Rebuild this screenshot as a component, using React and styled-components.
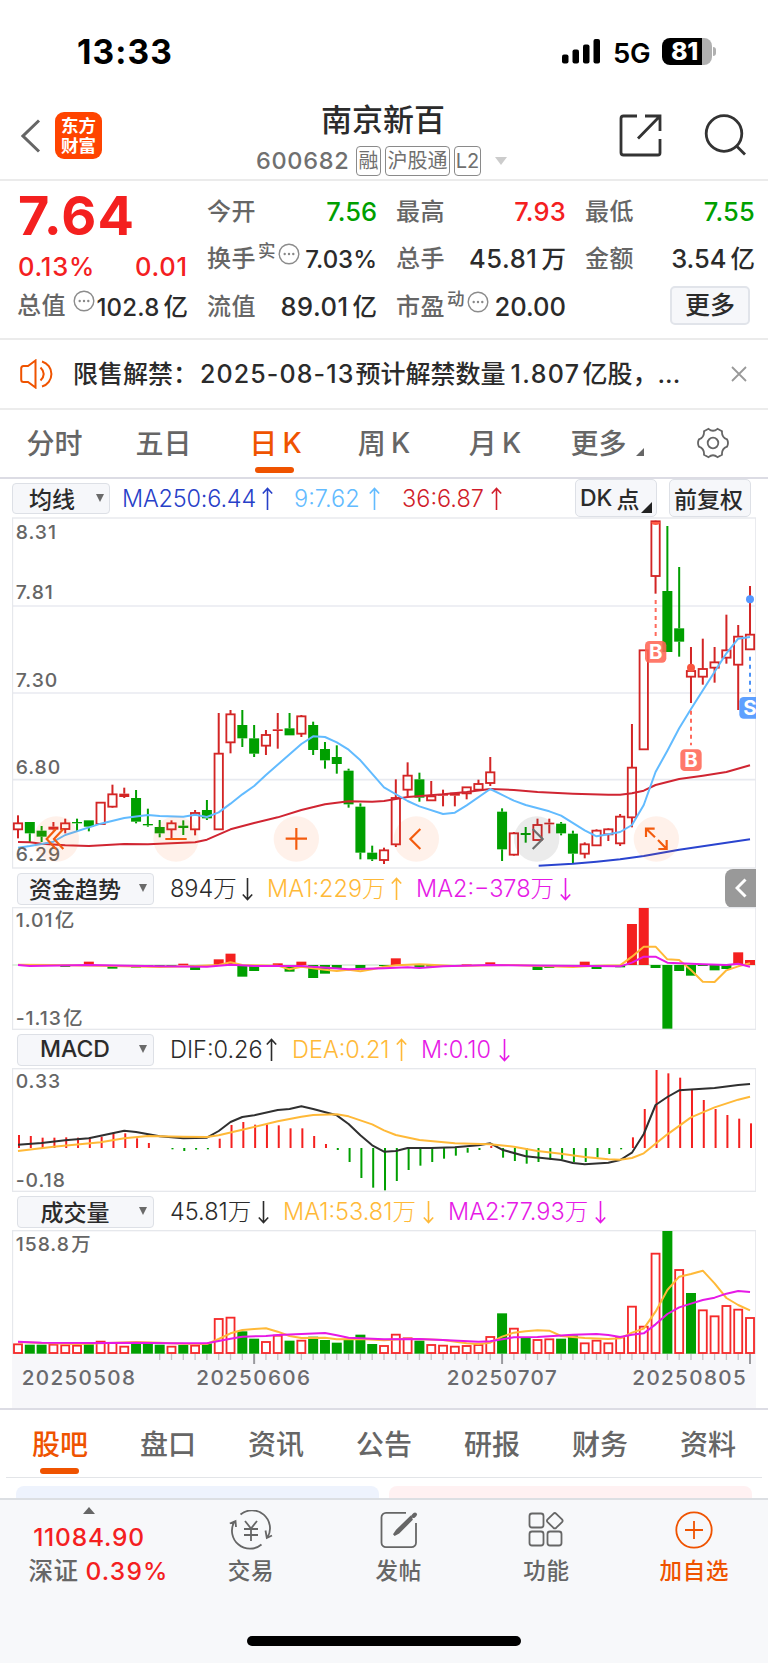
import React from "react";
import styled, { createGlobalStyle } from "styled-components";

const RED = "#f4201f";
const GREEN = "#009f00";
const ORANGE = "#ef5300";
const YELLOW = "#ffb938";
const PURPLE = "#e619e6";
const DARK = "#2b2b2b";
const GREY = "#666";

/* ---------- data ---------- */

// [type, high, top, bottom, low]
const candles = [
  ["r", 916, 940, 958, 985], ["g", 936, 936, 970, 996], ["g", 948, 962, 980, 996],
  ["R", 936, 950, 959, 961], ["r", 926, 940, 957, 970], ["g", 926, 936, 940, 963],
  ["g", 931, 931, 950, 964], ["r", 878, 878, 942, 942], ["r", 824, 853, 890, 893],
  ["R", 833, 851, 861, 864], ["g", 840, 864, 935, 940], ["g", 896, 942, 946, 950],
  ["g", 930, 951, 970, 982], ["r", 931, 940, 958, 985], ["g", 931, 947, 954, 975],
  ["r", 900, 909, 958, 976], ["g", 870, 900, 925, 930], ["r", 609, 731, 958, 960],
  ["r", 600, 613, 697, 730], ["g", 600, 645, 685, 711], ["g", 645, 685, 731, 741],
  ["r", 660, 675, 707, 735], ["R", 609, 658, 663, 716], ["g", 609, 655, 676, 676],
  ["r", 615, 619, 671, 681], ["g", 635, 645, 720, 735], ["g", 696, 717, 751, 776],
  ["g", 706, 741, 762, 791], ["g", 776, 782, 883, 893], ["g", 880, 890, 1028, 1048],
  ["g", 1007, 1028, 1048, 1053], ["r", 1013, 1021, 1050, 1062], ["r", 808, 864, 1003, 1011],
  ["r", 757, 797, 839, 860], ["g", 788, 808, 863, 875], ["r", 813, 859, 871, 873],
  ["R", 839, 852, 857, 889], ["R", 848, 848, 857, 889], ["r", 832, 832, 850, 868],
  ["r", 809, 822, 839, 840], ["r", 741, 787, 819, 828], ["g", 895, 905, 1018, 1053],
  ["r", 966, 970, 1034, 1037], ["g", 951, 969, 975, 998], ["r", 926, 945, 990, 992],
  ["R", 926, 938, 943, 970], ["g", 936, 941, 970, 976], ["g", 962, 971, 1031, 1061],
  ["r", 997, 1003, 1031, 1045], ["r", 958, 962, 1006, 1008], ["r", 955, 958, 973, 993],
  ["r", 912, 920, 1000, 1008], ["r", 642, 773, 922, 952], ["r", 421, 421, 718, 718],
  ["r", 32, 34, 198, 251], ["g", 48, 243, 426, 426], ["g", 171, 355, 395, 440],
  ["r", 411, 483, 500, 579], ["r", 386, 477, 500, 524], ["r", 411, 457, 473, 518],
  ["r", 314, 421, 443, 461], ["r", 345, 380, 464, 600], ["r", 228, 374, 418, 420],
];

const ma9 = [
  [0, 1013], [1, 1008], [2, 1002], [3, 995], [4, 975], [7, 941], [9, 924], [11, 915], [12, 918],
  [14, 920], [15, 914], [16, 921], [17, 907], [18, 881], [19, 853], [20, 828], [21, 795], [24, 702],
  [25, 679], [26, 681], [27, 697], [28, 719], [29, 751], [31, 832], [33, 873], [34, 889], [36, 912],
  [37, 908], [38, 886], [40, 837], [42, 872], [43, 885], [45, 904], [46, 917], [48, 961], [49, 979],
  [50, 973], [51, 966], [52, 945], [53, 885], [54, 786], [55, 722], [56, 655], [57, 597], [60, 430],
  [61, 386], [62, 381],
];
const ma36 = [
  [0, 996], [1, 997], [2, 1001], [4, 1006], [6, 1008], [9, 1002], [11, 1003], [14, 998], [15, 997],
  [16, 989], [18, 958], [20, 939], [22, 922], [24, 900], [26, 883], [28, 874], [30, 875], [31, 873],
  [33, 861], [36, 853], [38, 846], [40, 837], [42, 840], [44, 846], [47, 851], [50, 854], [51, 854],
  [52, 850], [53, 842], [54, 825], [56, 807], [58, 797], [60, 786], [62, 766],
];
const ma250 = [[44.1, 1067], [47, 1061], [49, 1055], [51, 1048], [53, 1038], [56, 1019], [62, 988]];

const fundBars = [
  [4, 321], [6, 305], [8, 326], [9, 320], [10, 323], [11, 321], [12, 320], [13, 319], [14, 311],
  [15, 330], [16, 320], [17, 298], [18, 281], [19, 350], [20, 333], [22, 310], [23, 335], [24, 305],
  [25, 354], [26, 341], [27, 324], [29, 328], [31, 318], [32, 295], [34, 323], [35, 320], [38, 313],
  [40, 307], [44, 330], [45, 324], [48, 305], [49, 327], [51, 322], [52, 192], [53, 144], [54, 324],
  [55, 506], [56, 333], [57, 347], [58, 318], [59, 331], [60, 327], [61, 277], [62, 300],
];
const fundMa1 = [
  [0, 314], [3, 315], [7, 317], [12, 321], [15, 318], [17, 315], [18, 307], [19, 315], [22, 317],
  [23, 328], [24, 320], [26, 329], [27, 333], [28, 329], [29, 334], [30, 328], [31, 320], [32, 316],
  [34, 313], [37, 318], [40, 316], [42, 315], [44, 318], [47, 321], [49, 317], [51, 316], [52, 290],
  [53, 260], [54, 260], [55, 298], [56, 300], [57, 330], [58, 365], [59, 366], [60, 331], [61, 319],
  [62, 310],
];
const fundMa2 = [
  [0, 315], [1, 318], [6, 315], [12, 319], [16, 320], [18, 314], [20, 318], [24, 318], [28, 328],
  [31, 325], [33, 322], [34, 324], [36, 319], [40, 315], [46, 317], [51, 319], [52, 308], [53, 290],
  [54, 290], [55, 308], [58, 313], [60, 315], [61, 311], [62, 320],
];

const macdBars = [
  825, 828, 833, 833, 832, 833, 833, 830, 818, 820, 835, 849, 864, 868, 873, 869, 868, 836, 795, 786,
  794, 793, 796, 805, 805, 828, 852, 870, 906, 954, 983, 991, 963, 930, 917, 906, 896, 887, 878, 870,
  858, 893, 903, 911, 906, 899, 898, 907, 906, 893, 882, 868, 832, 747, 630, 640, 653, 688, 720, 747,
  765, 776, 790,
];
const dif = [
  [0, 854], [2, 849], [4, 841], [6, 835], [7, 827], [9, 812], [10, 816], [12, 829], [14, 835],
  [16, 833], [17, 813], [18, 786], [19, 771], [20, 766], [22, 750], [23, 747], [24, 739], [25, 747],
  [27, 766], [28, 792], [29, 826], [30, 856], [31, 875], [32, 873], [33, 864], [35, 864], [37, 862],
  [39, 856], [40, 850], [41, 869], [43, 889], [45, 896], [46, 900], [47, 909], [48, 913], [50, 908],
  [51, 900], [52, 878], [53, 822], [54, 735], [55, 711], [56, 691], [58, 686], [59, 684], [61, 675],
  [62, 672],
];
const dea = [
  [0, 873], [3, 860], [7, 847], [9, 835], [11, 828], [14, 830], [16, 831], [17, 826], [19, 809],
  [22, 784], [24, 770], [25, 765], [27, 763], [28, 769], [30, 793], [31, 811], [32, 825], [34, 840],
  [37, 850], [40, 853], [42, 860], [44, 873], [46, 881], [48, 891], [50, 898], [51, 899], [52, 894],
  [53, 880], [55, 823], [57, 772], [59, 742], [61, 719], [62, 710],
];

const volumes = [
  461, 464, 464, 462, 464, 465, 463, 453, 457, 468, 459, 461, 464, 468, 465, 465, 460, 385, 381, 424,
  446, 454, 435, 452, 450, 440, 450, 458, 448, 434, 462, 466, 432, 443, 452, 463, 465, 468, 466, 463,
  439, 370, 414, 441, 448, 446, 446, 436, 458, 450, 458, 440, 348, 408, 189, 123, 238, 309, 359, 377,
  346, 357, 382,
];
const volGreen = [1, 2, 6, 10, 11, 12, 14, 16, 19, 20, 23, 25, 26, 27, 28, 29, 30, 34, 41, 43, 46, 47, 55, 57];
const volMa1 = [
  [0, 456], [2, 459], [5, 462], [7, 460], [10, 456], [12, 458], [14, 461], [16, 462], [17, 447],
  [18, 430], [19, 420], [20, 417], [21, 415], [22, 425], [23, 438], [24, 444], [26, 443], [27, 448],
  [29, 447], [31, 451], [33, 446], [36, 450], [38, 460], [39, 462], [40, 458], [41, 440], [42, 428],
  [43, 424], [44, 421], [45, 422], [46, 438], [48, 444], [50, 447], [51, 445], [52, 428], [53, 416],
  [54, 365], [55, 300], [56, 260], [57, 252], [58, 242], [59, 280], [60, 324], [61, 345], [62, 361],
];
const volMa2 = [
  [0, 455], [2, 458], [7, 459], [10, 458], [13, 460], [16, 460], [17, 453], [18, 446], [19, 440],
  [21, 438], [22, 435], [24, 432], [26, 429], [27, 436], [28, 443], [31, 448], [34, 447], [36, 450],
  [39, 455], [40, 454], [42, 442], [44, 441], [47, 434], [49, 432], [50, 435], [51, 441], [52, 434],
  [53, 430], [54, 403], [55, 372], [56, 352], [57, 341], [58, 330], [59, 323], [60, 311], [61, 303],
  [62, 306],
];

const x = (i) => 54 + i * 35.42;
const toPoints = (line) => line.map(([i, y]) => `${x(i)},${y}`).join(" ");

/* ---------- charts ---------- */

function Line({ data, color }) {
  return <polyline points={toPoints(data)} fill="none" stroke={color} strokeWidth="6" strokeLinejoin="round" />;
}

function Frame({ top, bottom }) {
  return <rect x="37.5" y={top} width="2230" height={bottom - top} fill="none" stroke="#e6e8ec" strokeWidth="4" />;
}

function Candle({ index, data }) {
  const [type, high, top, bottom, low] = data;
  const cx = x(index);
  const color = type === "g" ? GREEN : "#d32525";
  const hollow = type === "r";
  return (
    <g>
      {high < top && <rect x={cx - 3} y={high} width="6" height={top - high} fill={color} />}
      {low > bottom && <rect x={cx - 3} y={bottom} width="6" height={low - bottom} fill={color} />}
      {hollow ? (
        <rect x={cx - 12.5} y={top} width="25" height={bottom - top} fill="none" stroke={color} strokeWidth="5.5" />
      ) : (
        <rect x={cx - 15} y={top} width="30" height={bottom - top} fill={color} />
      )}
    </g>
  );
}

function Mark({ cx, y, label, color }) {
  return (
    <g>
      <rect x={cx - 32} y={y} width="64" height="65" rx="13" fill={color} />
      <MarkText x={cx} y={y + 54}>{label}</MarkText>
    </g>
  );
}

function PriceChart() {
  return (
    <ChartSvg $h={352} viewBox="36 21 2232 1056" preserveAspectRatio="none">
      {[288, 549, 809].map((y) => (
        <line key={y} x1="37" x2="2267" y1={y} y2={y} stroke="#e8eaf0" strokeWidth="5" />
      ))}
      <Frame top={24} bottom={1074} />
      {candles.map((c, i) => (
        <Candle key={i} index={i} data={c} />
      ))}
      <Line data={ma36} color="#d02532" />
      <Line data={ma9} color="#62bbff" />
      <Line data={ma250} color="#2a44cf" />
      {[[8.31, 67], [7.81, 247], [7.3, 511], [6.8, 772], [6.29, 1033]].map(([v, y]) => (
        <AxisText key={v} x="47" y={y + 21}>{v.toFixed(2)}</AxisText>
      ))}

      {/* buy / sell marks */}
      <g strokeWidth="6" strokeDasharray="12 12" fill="none">
        <path d="M1967 270V378M2073 602V706" stroke="#ff6a5c" />
        <path d="M2250 440V546" stroke="#4b92f7" />
      </g>
      <path d="M1954 36h26a13 9 0 0 1-26 0z" fill="#ff5b45" />
      <circle cx="2073" cy="473" r="12" fill="#f9553f" />
      <circle cx="2250" cy="268" r="12" fill="#5598ff" />
      <Mark cx={1967} y={393} label="B" color="rgba(255,102,85,.88)" />
      <Mark cx={2073} y={718} label="B" color="rgba(255,102,85,.88)" />
      <Mark cx={2250} y={561} label="S" color="#5ea0ff" />

      {/* floating chart controls */}
      {[169, 528, 889, 1249, 1969].map((cx) => (
        <circle key={cx} cx={cx} cy="987" r="68" fill="rgba(255,95,20,.09)" />
      ))}
      <circle cx="1610" cy="987" r="68" fill="rgba(60,60,60,.1)" />
      <g fill="none" stroke="#f35b0e" strokeWidth="6.5">
        <path d="M168 957L140 987L168 1017M190 957L162 987L190 1017" />
        <path d="M496 987H560M857 986H921M889 954V1019" />
        <path d="M1261 957L1231 987L1261 1017" />
        <path d="M1938 981V956H1964M1940 958L1965 982M1975 1017H2000V990M1998 1015L1974 990" />
      </g>
      <path d="M1598 957L1628 987L1598 1017" fill="none" stroke="#6d6d6d" strokeWidth="6.5" />
    </ChartSvg>
  );
}

function FundChart() {
  return (
    <ChartSvg $h={123} viewBox="36 141 2232 369" preserveAspectRatio="none">
      <Frame top={143} bottom={508} />
      <line x1="37" x2="2267" y1="315" y2="315" stroke="#bfe0bf" strokeWidth="3" />
      {fundBars.map(([i, y]) => (
        <rect
          key={i}
          x={x(i) - 15}
          y={Math.min(y, 315)}
          width="30"
          height={Math.abs(y - 315)}
          fill={y < 315 ? RED : GREEN}
        />
      ))}
      <Line data={fundMa1} color={YELLOW} />
      <Line data={fundMa2} color={PURPLE} />
      <AxisText x="47" y="200">
        1.01<tspan dx="4">亿</tspan>
      </AxisText>
      <AxisText x="47" y="496">
        -1.13<tspan dx="4">亿</tspan>
      </AxisText>
    </ChartSvg>
  );
}

function MacdChart() {
  return (
    <ChartSvg $h={124} viewBox="36 624 2232 372" preserveAspectRatio="none">
      <Frame top={626} bottom={994} />
      {macdBars.map((y, i) => (
        <rect
          key={i}
          x={x(i)}
          y={Math.min(y, 864)}
          width="6"
          height={Math.abs(y - 864)}
          fill={y < 864 ? RED : GREEN}
        />
      ))}
      <Line data={dif} color="#303030" />
      <Line data={dea} color={YELLOW} />
      <AxisText x="47" y="685">0.33</AxisText>
      <AxisText x="47" y="982">-0.18</AxisText>
    </ChartSvg>
  );
}

function VolumeChart() {
  return (
    <ChartSvg $h={124} viewBox="36 120 2232 372" preserveAspectRatio="none">
      <Frame top={122} bottom={491} />
      {volumes.map((y, i) =>
        volGreen.includes(i) ? (
          <rect key={i} x={x(i) - 15} y={y} width="30" height={491 - y} fill={GREEN} />
        ) : (
          <rect key={i} x={x(i) - 12} y={y + 2} width="24" height={487 - y} fill="#fff" stroke="#f52a2a" strokeWidth="5.5" />
        )
      )}
      <Line data={volMa1} color={YELLOW} />
      <Line data={volMa2} color={PURPLE} />
      <AxisText x="47" y="182">
        158.8<tspan dx="4">万</tspan>
      </AxisText>
    </ChartSvg>
  );
}

function DateAxis() {
  const ticks = Array.from({ length: 51 }, (_, k) => k + 12);
  return (
    <ChartSvg $h={54} $bg="#f7f7fa" viewBox="36 492 2232 162" preserveAspectRatio="none">
      {ticks.map((i) => {
        const major = i === 20 || i === 41 || i === 62;
        return (
          <line
            key={i}
            x1={x(i)}
            x2={x(i)}
            y1="492"
            y2={major ? 522 : 510}
            stroke={major ? "#9a9a9e" : "#c4c4c8"}
            strokeWidth={major ? 6 : 4}
          />
        );
      })}
      {[[65, "20250508"], [589, "20250606"], [1340, "20250707"], [1897, "20250805"]].map(([tx, date]) => (
        <DateText key={date} x={tx} y="584">{date}</DateText>
      ))}
    </ChartSvg>
  );
}

/* ---------- small parts ---------- */

function Arrow({ down }) {
  return (
    <ArrowSvg viewBox="0 0 11 24">
      <path d={down ? "M5.5 1V22.5M.8 17.5L5.5 22.5L10.2 17.5" : "M5.5 23V1.5M.8 6.5L5.5 1.5L10.2 6.5"} />
    </ArrowSvg>
  );
}

function Reading({ text, down, color, w, gap, ls }) {
  return (
    <ReadingBox $color={color} $w={w} $gap={gap} $ls={ls}>
      <span>{text}</span>
      <Arrow down={down} />
    </ReadingBox>
  );
}

function Select({ label }) {
  return (
    <SelectButton>
      <SelectLabel>{label}</SelectLabel>
      <Caret />
    </SelectButton>
  );
}

function Dots() {
  return (
    <DotsSvg viewBox="0 0 22 22">
      <circle cx="11" cy="11" r="9.8" fill="none" stroke="#8c8c8c" strokeWidth="1.4" />
      <circle cx="6.7" cy="11" r="1.2" />
      <circle cx="11" cy="11" r="1.2" />
      <circle cx="15.3" cy="11" r="1.2" />
    </DotsSvg>
  );
}

function Cell({ label, sup, dots, value, unit, color, small, ls }) {
  return (
    <CellBox>
      <CellLabel>{label}</CellLabel>
      {sup && <Sup>{sup}</Sup>}
      {dots && <Dots />}
      <CellValue $color={color} $ls={ls} $small={small}>
        {value}
        {unit && <Unit>{unit}</Unit>}
      </CellValue>
    </CellBox>
  );
}

/* ---------- page ---------- */

function App() {
  return (
    <Page>
      <GlobalStyle />

      <StatusBar>
        <Time>13:33</Time>
        <Signal viewBox="0 0 39 25">
          <rect x="0" y="15.5" width="6.5" height="9" rx="2" />
          <rect x="10.5" y="10.5" width="6.5" height="14" rx="2" />
          <rect x="21" y="5.5" width="6.5" height="19" rx="2" />
          <rect x="31.5" y="0" width="6.5" height="24.5" rx="2" />
        </Signal>
        <Network>5G</Network>
        <Battery>81</Battery>
        <BatteryCap />
      </StatusBar>

      <Header>
        <BackIcon viewBox="0 0 20 34">
          <path d="M18 1.5L2 17L18 32.5" />
        </BackIcon>
        <Logo>
          <span>东方</span>
          <span>财富</span>
        </Logo>
        <TitleBlock>
          <Title>南京新百</Title>
          <CodeRow>
            <Code>600682</Code>
            <Tag $w={25}>融</Tag>
            <Tag $w={65}>沪股通</Tag>
            <Tag $w={27}>L2</Tag>
            <TitleCaret />
          </CodeRow>
        </TitleBlock>
        <HeaderIcon viewBox="0 0 43 43">
          <path d="M18 2H4.5A2.5 2.5 0 0 0 2 4.5V38.5A2.5 2.5 0 0 0 4.5 41H39A2 2 0 0 0 41 39V25M26 2H41V17M41 2L19 24.5" />
        </HeaderIcon>
        <HeaderIcon viewBox="0 0 43 43">
          <circle cx="20" cy="19.5" r="17.8" />
          <path d="M32.5 32L41 40.5" />
        </HeaderIcon>
      </Header>

      <Quote>
        <PriceColumn>
          <Price>7.64</Price>
          <Change>
            <span>0.13%</span>
            <span>0.01</span>
          </Change>
          <Cell label="总值" dots value="102.8" unit="亿" small ls={0.2} />
        </PriceColumn>
        <Column>
          <Cell label="今开" value="7.56" color={GREEN} />
          <Cell label="换手" sup="实" dots value="7.03%" small />
          <Cell label="流值" value="89.01" unit="亿" ls={0.5} />
        </Column>
        <Column>
          <Cell label="最高" value="7.93" color={RED} ls={0.2} />
          <Cell label="总手" value="45.81" unit="万" ls={0.6} />
          <Cell label="市盈" sup="动" dots value="20.00" />
        </Column>
        <Column>
          <Cell label="最低" value="7.55" color={GREEN} ls={0.2} />
          <Cell label="金额" value="3.54" unit="亿" />
          <MoreRow>
            <MoreButton>更多</MoreButton>
          </MoreRow>
        </Column>
      </Quote>

      <Notice>
        <Speaker viewBox="0 0 33 30">
          <path d="M15.5 1.5L8 7H3.5Q1.2 7 1.2 9.5V20.5Q1.2 23 3.5 23H8L15.5 28.5Z" />
          <path d="M20.5 8.5Q27 15 20.5 21.5M22 2.5A13 13 0 0 1 22 27.5" />
        </Speaker>
        <NoticeText>
          限售解禁：
          <NoticeNumber $ls={1.1} $l={2} $r={1}>2025-08-13</NoticeNumber>
          预计解禁数量
          <NoticeNumber $ls={1.4} $l={5} $r={2}>1.807</NoticeNumber>
          亿股，...
        </NoticeText>
        <CloseIcon viewBox="0 0 16 16">
          <path d="M1 1L15 15M15 1L1 15" />
        </CloseIcon>
      </Notice>

      <PeriodTabs>
        <PeriodTab>分时</PeriodTab>
        <PeriodTab>五日</PeriodTab>
        <PeriodTab $active>
          日<K>K</K>
        </PeriodTab>
        <PeriodTab>
          周<K>K</K>
        </PeriodTab>
        <PeriodTab>
          月<K>K</K>
        </PeriodTab>
        <PeriodTab>
          更多
          <Corner />
        </PeriodTab>
        <Gear viewBox="0 0 32 32">
          <path d="M11.5 1.8Q16 5.8 20.5 1.8L25 4.2Q24.5 10.2 30 12.3Q32 16 30 19.7Q24.5 21.8 25 27.8L20.5 30.2Q16 26.2 11.5 30.2L7 27.8Q7.5 21.8 2 19.7Q0 16 2 12.3Q7.5 10.2 7 4.2Z" />
          <circle cx="16" cy="16" r="5.3" />
        </Gear>
      </PeriodTabs>

      <MaRow>
        <MaSelect>
          均线
          <Caret />
        </MaSelect>
        <Reading text="MA250:6.44" color="#2740c8" w={151} gap={21} ls={-0.2} />
        <Reading text="9:7.62" color="#62bbff" w={86} gap={22} />
        <Reading text="36:6.87" color="#d01c2a" w={100} />
        <MaButton>
          <span>DK</span>
          <span>点</span>
          <ButtonCorner />
        </MaButton>
        <MaButton>前复权</MaButton>
      </MaRow>
      <PriceChart />

      <LegendRow>
        <Select label="资金趋势" />
        <Reading text="894万" down color={DARK} w={83} gap={14} />
        <Reading text="MA1:229万" color={YELLOW} w={135} gap={14} />
        <Reading text="MA2:−378万" down color={PURPLE} w={155} />
        <Collapse>
          <svg width="12" height="20" viewBox="0 0 12 20">
            <path d="M10.5 1.5L2 10L10.5 18.5" fill="none" stroke="#fff" strokeWidth="3" />
          </svg>
        </Collapse>
      </LegendRow>
      <FundChart />

      <LegendRow>
        <Select label="MACD" />
        <Reading text="DIF:0.26" color={DARK} w={107} gap={15} />
        <Reading text="DEA:0.21" color={YELLOW} w={115} gap={14} />
        <Reading text="M:0.10" down color={PURPLE} w={89} />
      </LegendRow>
      <MacdChart />

      <LegendRow>
        <Select label="成交量" />
        <Reading text="45.81万" down color={DARK} w={99} gap={14} />
        <Reading text="MA1:53.81万" down color={YELLOW} w={151} gap={14} />
        <Reading text="MA2:77.93万" down color={PURPLE} w={158} />
      </LegendRow>
      <VolumeChart />
      <DateAxis />

      <InfoSection>
        <InfoTabs>
          {["股吧", "盘口", "资讯", "公告", "研报", "财务", "资料"].map((name, i) => (
            <InfoTab key={name} $active={i === 0}>{name}</InfoTab>
          ))}
        </InfoTabs>
      </InfoSection>
      <Cards>
        <Card $bg="#eef3fd" />
        <Card $bg="#fff1f2" />
      </Cards>

      <BottomBar>
        <BottomItems>
          <IndexBox>
            <UpCaret />
            <IndexValue>11084.90</IndexValue>
            <IndexRow>
              深证 <IndexChange>0.39%</IndexChange>
            </IndexRow>
          </IndexBox>
          <NavItem>
            <NavIcon viewBox="0 0 44 40">
              <path d="M11.5 4.5A18 18 0 0 1 38.5 27.5M32.5 34.5A18 18 0 0 1 5.2 12M.8 13.5L6.5 11L7 17M36.5 20.5L37.8 28L43 25.5" />
              <path d="M16 11L22 18.5L28 11M15 19H29M15 25H29M22 18.5V31" />
            </NavIcon>
            交易
          </NavItem>
          <NavItem>
            <NavIcon viewBox="0 0 44 40">
              <path d="M29 2.8H9A4.5 4.5 0 0 0 4.5 7.3V32.7A4.5 4.5 0 0 0 9 37.2H34.5A4.5 4.5 0 0 0 39 32.7V13" />
              <path d="M33.8 7.2L20 20.5L17 25L21.5 22.5L34.5 9.5Z" strokeWidth="2.4" fill={GREY} />
              <path d="M36.5 6L38 4.5" strokeWidth="4" strokeLinecap="round" />
            </NavIcon>
            发帖
          </NavItem>
          <NavItem>
            <NavIcon viewBox="0 0 44 40">
              <rect x="5.5" y="3.5" width="14" height="14" rx="2.5" />
              <rect x="5.5" y="21.5" width="14" height="14" rx="2.5" />
              <rect x="23.5" y="21.5" width="14" height="14" rx="2.5" />
              <path d="M29.3 3.8Q30.8 2.3 32.3 3.8L38 9.4Q39.3 10.8 38 12.2L32.3 17.7Q30.8 19 29.3 17.7L23.6 12.2Q22.3 10.8 23.6 9.4Z" />
            </NavIcon>
            功能
          </NavItem>
          <NavItem $active>
            <NavIcon viewBox="0 0 44 40">
              <circle cx="22" cy="20" r="17.7" />
              <path d="M22 11V29M13 20H31" />
            </NavIcon>
            加自选
          </NavItem>
        </BottomItems>
        <HomeIndicator />
      </BottomBar>
    </Page>
  );
}

export default App;

/* ---------- styled ---------- */

const GlobalStyle = createGlobalStyle`
  * {
    box-sizing: border-box;
  }

  body {
    margin: 0;
    background: #fff;
  }
`;

const Page = styled.div`
  width: 768px;
  height: 1663px;
  display: flex;
  flex-direction: column;
  overflow: hidden;
  background: #fff;
  color: ${DARK};
  font-family: Inter, "Noto Sans CJK SC", sans-serif;
  white-space: nowrap;
`;

const StatusBar = styled.div`
  height: 91px;
  padding: 12px 0 0 77px;
  display: flex;
  align-items: center;
  color: #000;
`;

const Time = styled.div`
  width: 485px;
  font-size: 33.5px;
  font-weight: 700;
  letter-spacing: 1.1px;
`;

const Signal = styled.svg`
  width: 39px;
  height: 25px;
  margin-bottom: 1px;
`;

const Network = styled.div`
  width: 49px;
  margin: 2px 0 0 12px;
  font-size: 27.5px;
  font-weight: 600;
  letter-spacing: -0.2px;
`;

const Battery = styled.div`
  width: 50px;
  height: 27px;
  border-radius: 8px;
  padding-left: 9px;
  background: linear-gradient(90deg, #000 81%, #b0b0b0 81%);
  color: #fff;
  font-size: 25px;
  font-weight: 800;
  line-height: 27px;
  letter-spacing: -0.3px;
`;

const BatteryCap = styled.div`
  width: 3px;
  height: 9px;
  margin-left: 1px;
  border-radius: 0 4px 4px 0;
  background: #b0b0b0;
`;

const Header = styled.div`
  height: 90px;
  padding: 0 20px 0 21px;
  display: flex;
  align-items: center;
  border-bottom: 2px solid #ebebeb;
`;

const BackIcon = styled.svg`
  width: 20px;
  height: 34px;
  margin-top: 2px;
  fill: none;
  stroke: #666;
  stroke-width: 3;
`;

const Logo = styled.div`
  width: 47px;
  height: 47px;
  margin-left: 14px;
  padding-top: 4px;
  display: flex;
  flex-direction: column;
  align-items: center;
  border-radius: 9px;
  background: #ff4400;
  color: #fff;
  font-size: 17.5px;
  font-weight: 700;
  line-height: 20px;
`;

const TitleBlock = styled.div`
  width: 517px;
  padding: 5px 0 0 154px;
  display: flex;
  flex-direction: column;
`;

const Title = styled.div`
  padding-left: 65px;
  font-size: 31px;
  font-weight: 500;
  line-height: 40px;
`;

const CodeRow = styled.div`
  margin-top: 6px;
  display: flex;
  align-items: center;
  gap: 4px;
`;

const Code = styled.div`
  width: 96px;
  font-size: 23.5px;
  font-weight: 500;
  line-height: 30px;
  letter-spacing: 0.7px;
  color: #707070;
`;

const Tag = styled.div`
  width: ${({ $w }) => $w}px;
  height: 30px;
  border: 1.5px solid #8a8a8a;
  border-radius: 4px;
  text-align: center;
  font-size: 20px;
  line-height: 28px;
  color: #707070;
`;

const TitleCaret = styled.div`
  margin-left: 10px;
  border: 6.5px solid transparent;
  border-top: 8px solid #ccc;
  border-bottom: 0;
`;

const HeaderIcon = styled.svg`
  width: 43px;
  height: 43px;
  margin-top: 1px;
  flex: none;
  fill: none;
  stroke: #333;
  stroke-width: 2.8;

  & + & {
    margin-left: 42px;
  }
`;

const Quote = styled.div`
  height: 159px;
  padding: 7px 13px 0 18px;
  display: grid;
  grid-template-columns: 170px repeat(3, 169px);
  column-gap: 20px;
  border-bottom: 2px solid #ebebeb;
`;

const Column = styled.div`
  display: grid;
  grid-template-rows: repeat(3, 47.5px);
`;

const PriceColumn = styled.div`
  display: grid;
  grid-template-rows: 55px 46px 34px;
`;

const Price = styled.div`
  font-size: 54px;
  font-weight: 700;
  line-height: 55px;
  letter-spacing: 1.1px;
  color: ${RED};
`;

const Change = styled.div`
  display: flex;
  align-items: center;
  justify-content: space-between;
  font-size: 25.5px;
  font-weight: 500;
  letter-spacing: 0.8px;
  color: ${RED};
`;

const CellBox = styled.div`
  display: flex;
  align-items: center;
  font-size: 24px;
  line-height: 32px;
`;

const CellLabel = styled.div`
  margin-left: -1px;
  color: ${GREY};
  font-weight: 500;
  letter-spacing: 0.5px;
`;

const Sup = styled.div`
  margin: -16px 0 0 2px;
  font-size: 17.5px;
  font-weight: 500;
  color: ${GREY};
`;

const DotsSvg = styled.svg`
  width: 22px;
  height: 22px;
  margin: -10px 0 0 7px;
  flex: none;
  fill: #888;

  ${Sup} + & {
    margin-left: 2px;
  }
`;

const CellValue = styled.div`
  margin-left: auto;
  padding-top: ${({ $small }) => ($small ? 2 : 0)}px;
  font-size: ${({ $small }) => ($small ? 24 : 25.5)}px;
  font-weight: 500;
  letter-spacing: ${({ $ls }) => $ls || 0}px;
  color: ${({ $color }) => $color || DARK};
`;

const Unit = styled.span`
  margin-left: 4px;
  font-size: 24.5px;
  letter-spacing: 0;
`;

const MoreRow = styled.div`
  display: flex;
  align-items: center;
  justify-content: flex-end;
  padding: 0 5px 2px 0;
`;

const MoreButton = styled.button`
  width: 80px;
  height: 39px;
  padding: 0;
  border: 2px solid #e1e4ea;
  border-radius: 5px;
  background: #f6f7fa;
  color: ${DARK};
  font-family: inherit;
  font-size: 25px;
  font-weight: 500;
  line-height: 33px;
`;

const Notice = styled.div`
  height: 70px;
  padding: 0 20px;
  display: flex;
  align-items: center;
  border-bottom: 2px solid #ececec;
`;

const Speaker = styled.svg`
  width: 33px;
  height: 30px;
  flex: none;
  fill: none;
  stroke: ${ORANGE};
  stroke-width: 2;
`;

const NoticeText = styled.div`
  width: 658px;
  margin-left: 20px;
  font-size: 25px;
  font-weight: 500;
  line-height: 36px;
`;

const NoticeNumber = styled.span`
  margin: 0 ${({ $r }) => $r}px 0 ${({ $l }) => $l}px;
  letter-spacing: ${({ $ls }) => $ls}px;
`;

const CloseIcon = styled.svg`
  width: 16px;
  height: 16px;
  flex: none;
  fill: none;
  stroke: #999;
  stroke-width: 1.8;
`;

const PeriodTabs = styled.div`
  height: 69px;
  padding: 0 39px 0 0;
  display: grid;
  grid-template-columns: 109px 109px 114px 104px 118px 106px 1fr;
  border-bottom: 2px solid #dcdce4;
  align-items: center;
`;

const PeriodTab = styled.div`
  position: relative;
  height: 67px;
  padding: 0 0 3px ${({ $active }) => ($active ? 1 : 0)}px;
  display: flex;
  align-items: center;
  justify-content: center;
  font-size: 28px;
  font-weight: 500;
  color: ${({ $active }) => ($active ? ORANGE : GREY)};

  &::after {
    content: "";
    display: ${({ $active }) => ($active ? "block" : "none")};
    position: absolute;
    left: 37px;
    bottom: 4px;
    width: 39px;
    height: 6px;
    border-radius: 3px;
    background: ${ORANGE};
  }
`;

const K = styled.span`
  margin: 2px 0 0 5px;
`;

const Corner = styled.span`
  margin: 20px 0 0 9px;
  border-left: 8px solid transparent;
  border-bottom: 8px solid currentColor;
`;

const Gear = styled.svg`
  width: 32px;
  height: 32px;
  margin-bottom: 2px;
  justify-self: end;
  fill: none;
  stroke: ${GREY};
  stroke-width: 1.8;
`;

const MaRow = styled.div`
  height: 38px;
  padding: 0 17px 0 12px;
  display: flex;
  align-items: center;
`;

const MaSelect = styled.button`
  width: 98px;
  height: 31px;
  margin-right: 12px;
  padding: 0 5px 0 16px;
  display: flex;
  align-items: center;
  justify-content: space-between;
  border: 1.5px solid #dde0e6;
  border-radius: 4px;
  background: #f6f7fa;
  color: ${DARK};
  font-family: inherit;
  font-size: 23px;
  font-weight: 500;
`;

const Caret = styled.span`
  border: 4.5px solid transparent;
  border-top: 8px solid #6a6a6a;
  border-bottom: 0;
`;

const MaButton = styled.button`
  position: relative;
  width: 82px;
  height: 38px;
  margin-left: auto;
  padding: 0 0 0 4px;
  display: flex;
  align-items: center;
  gap: 4px;
  border: 1.5px solid #dde0e6;
  border-radius: 5px;
  background: #f6f7fa;
  color: ${DARK};
  font-family: inherit;
  font-size: 23px;
  font-weight: 500;

  & + & {
    margin-left: 12px;
  }
`;

const ButtonCorner = styled.span`
  position: absolute;
  right: 4px;
  bottom: 3px;
  border-left: 11px solid transparent;
  border-bottom: 11px solid #222;
`;

const ReadingBox = styled.div`
  width: ${({ $w }) => $w}px;
  margin-right: ${({ $gap }) => $gap || 0}px;
  padding-top: 2px;
  display: flex;
  align-items: center;
  justify-content: space-between;
  font-size: 23.5px;
  font-weight: 300;
  line-height: 34px;
  letter-spacing: ${({ $ls }) => $ls || 0}px;
  color: ${({ $color }) => $color};
`;

const ArrowSvg = styled.svg`
  width: 11px;
  height: 24px;
  flex: none;
  fill: none;
  stroke: currentColor;
  stroke-width: 1.6;
`;

const LegendRow = styled.div`
  height: 38px;
  padding: 0 12px 0 17px;
  display: flex;
  align-items: center;
`;

const SelectButton = styled.button`
  width: 137px;
  height: 32px;
  margin: 1px 16px 0 0;
  padding: 0 4px 1px 0;
  display: flex;
  align-items: center;
  border: 1.5px solid #dde0e6;
  border-radius: 4px;
  background: #f6f7fa;
  color: ${DARK};
  font-family: inherit;
  font-size: 23px;
  font-weight: 500;
`;

const SelectLabel = styled.span`
  width: 114px;
  margin-right: 7px;
  text-align: center;
`;

const Collapse = styled.div`
  width: 31px;
  height: 39px;
  margin-left: auto;
  display: flex;
  align-items: center;
  justify-content: center;
  border-radius: 8px 0 0 8px;
  background: #999;
`;

const ChartSvg = styled.svg`
  display: block;
  flex: none;
  width: 744px;
  height: ${({ $h }) => $h}px;
  margin-left: 12px;
  background: ${({ $bg }) => $bg || "transparent"};
`;

const AxisText = styled.text`
  font-size: 58px;
  font-weight: 500;
  letter-spacing: 3px;
  fill: #666;
`;

const DateText = styled.text`
  font-size: 62px;
  font-weight: 500;
  letter-spacing: 4px;
  fill: #6a6a6e;
`;

const MarkText = styled.text`
  font-size: 61px;
  font-weight: 700;
  text-anchor: middle;
  fill: #fff;
`;

const InfoSection = styled.div`
  height: 70px;
  padding: 0 6px;
  border-top: 2px solid #dcdce4;
`;

const InfoTabs = styled.div`
  height: 68px;
  display: grid;
  grid-template-columns: repeat(7, 108px);
  border-bottom: 1.5px solid #e3e5e8;
`;

const InfoTab = styled.div`
  position: relative;
  padding-bottom: 1px;
  display: flex;
  align-items: center;
  justify-content: center;
  font-size: 28px;
  font-weight: 500;
  color: ${({ $active }) => ($active ? ORANGE : GREY)};

  &::after {
    content: "";
    display: ${({ $active }) => ($active ? "block" : "none")};
    position: absolute;
    left: 34px;
    bottom: 3px;
    width: 39px;
    height: 6px;
    border-radius: 3px;
    background: ${ORANGE};
  }
`;

const Cards = styled.div`
  height: 20px;
  padding: 8px 16px 0;
  display: grid;
  grid-template-columns: 1fr 1fr;
  gap: 10px;
`;

const Card = styled.div`
  border-radius: 8px 8px 0 0;
  background: ${({ $bg }) => $bg};
`;

const BottomBar = styled.div`
  height: 165px;
  border-top: 2px solid #dcdfe3;
  background: #f7f8fa;
`;

const BottomItems = styled.div`
  height: 138px;
  display: grid;
  grid-template-columns: 177px repeat(4, 147.8px);
`;

const IndexBox = styled.div`
  display: flex;
  flex-direction: column;
  align-items: center;
  font-weight: 500;
`;

const UpCaret = styled.div`
  margin-top: 7px;
  border: 6.5px solid transparent;
  border-bottom: 7px solid ${GREY};
  border-top: 0;
`;

const IndexValue = styled.div`
  margin: 7px 0 0 1px;
  font-size: 24.5px;
  line-height: 32px;
  letter-spacing: 0.8px;
  color: ${RED};
`;

const IndexRow = styled.div`
  margin-left: 20px;
  font-size: 24.5px;
  line-height: 36px;
  letter-spacing: 0.5px;
  color: ${GREY};
`;

const IndexChange = styled.span`
  letter-spacing: 1.2px;
  color: ${RED};
`;

const NavItem = styled.div`
  padding-top: 10px;
  display: flex;
  flex-direction: column;
  align-items: center;
  font-size: 22.5px;
  font-weight: 500;
  line-height: 41px;
  letter-spacing: 0.7px;
  color: ${({ $active }) => ($active ? ORANGE : GREY)};
`;

const NavIcon = styled.svg`
  width: 44px;
  height: 40px;
  fill: none;
  stroke: currentColor;
  stroke-width: 1.8;
`;

const HomeIndicator = styled.div`
  width: 274px;
  height: 10px;
  margin: -2px auto 0;
  border-radius: 5px;
  background: #000;
`;
